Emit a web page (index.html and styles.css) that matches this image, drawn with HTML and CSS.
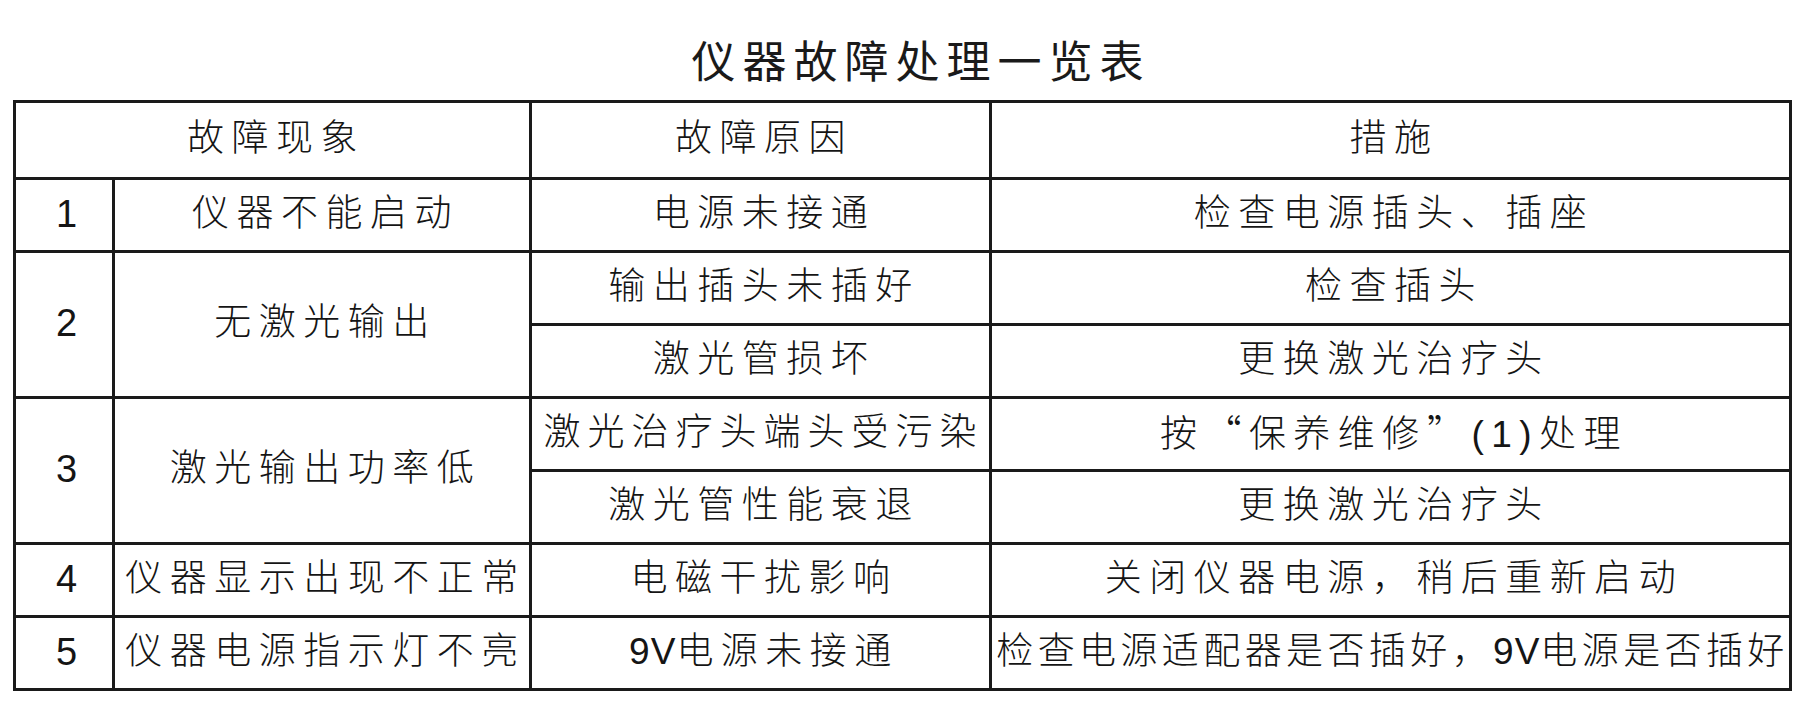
FILE: index.html
```html
<!DOCTYPE html>
<html lang="zh-CN">
<head>
<meta charset="utf-8">
<title>仪器故障处理一览表</title>
<link rel="stylesheet" href="styles.css">
</head>
<body>
<div class="page">
  <h1 class="title">仪器故障处理一览表</h1>
  <table class="fault-table">
    <colgroup>
      <col class="c-no">
      <col class="c-sym">
      <col class="c-cause">
      <col class="c-fix">
    </colgroup>
    <thead>
      <tr class="head-row">
        <th colspan="2">故障现象</th>
        <th>故障原因</th>
        <th>措施</th>
      </tr>
    </thead>
    <tbody>
      <tr>
        <td class="num">1</td>
        <td>仪器不能启动</td>
        <td>电源未接通</td>
        <td>检查电源插头、插座</td>
      </tr>
      <tr>
        <td class="num" rowspan="2">2</td>
        <td rowspan="2">无激光输出</td>
        <td>输出插头未插好</td>
        <td>检查插头</td>
      </tr>
      <tr>
        <td>激光管损坏</td>
        <td>更换激光治疗头</td>
      </tr>
      <tr>
        <td class="num" rowspan="2">3</td>
        <td rowspan="2">激光输出功率低</td>
        <td class="mid">激光治疗头端头受污染</td>
        <td>按<span class="q">“</span>保养维修<span class="q">”</span>(1)处理</td>
      </tr>
      <tr>
        <td>激光管性能衰退</td>
        <td>更换激光治疗头</td>
      </tr>
      <tr>
        <td class="num">4</td>
        <td>仪器显示出现不正常</td>
        <td>电磁干扰影响</td>
        <td>关闭仪器电源，稍后重新启动</td>
      </tr>
      <tr>
        <td class="num">5</td>
        <td>仪器电源指示灯不亮</td>
        <td><span class="lat">9V</span>电源未接通</td>
        <td class="tight">检查电源适配器是否插好，<span class="lat">9V</span>电源是否插好</td>
      </tr>
    </tbody>
  </table>
</div>
</body>
</html>
```

FILE: styles.css
```css
html, body {
  margin: 0;
  padding: 0;
  background: #ffffff;
}

.page {
  width: 1809px;
  height: 726px;
  padding: 0 0 0 13px;
  box-sizing: border-box;
  color: #151515;
}

.title {
  margin: 0;
  height: 100px;
  padding: 32px 0 0 40px;
  box-sizing: border-box;
  width: 1776px;
  text-align: center;
  font-family: "Noto Sans CJK SC", sans-serif;
  font-weight: 400;
  font-size: 44px;
  line-height: 54px;
  letter-spacing: 7px;
  color: #1a1a1a;
}

.fault-table {
  border-collapse: collapse;
  table-layout: fixed;
  width: 1776px;
  border: 3px solid #1a1a1a;
  font-family: "Liberation Sans", "Noto Sans CJK SC", sans-serif;
  font-weight: 300;
  font-size: 37px;
  letter-spacing: 7.5px;
  color: #151515;
}

.c-no { width: 99px; }
.c-sym { width: 417px; }
.c-cause { width: 460px; }
.c-fix { width: 800px; }

.fault-table th,
.fault-table td {
  border: 3px solid #1a1a1a;
  padding: 0 0 3px 7px;
  height: 67px;
  text-align: center;
  vertical-align: middle;
  font-weight: 300;
  white-space: nowrap;
  line-height: 44px;
}

.fault-table .head-row th {
  height: 71px;
}

.fault-table td.num {
  font-family: "Liberation Sans", sans-serif;
  font-weight: 400;
  font-size: 38px;
  letter-spacing: 0;
  padding-left: 5px;
}

.fault-table td.mid {
  letter-spacing: 7px;
  padding-left: 6px;
}

.fault-table td.tight {
  letter-spacing: 4.4px;
  padding-left: 4px;
}

.lat {
  letter-spacing: 1px;
  font-weight: 400;
}

.q {
  font-family: "Noto Sans CJK SC", sans-serif;
}
```
